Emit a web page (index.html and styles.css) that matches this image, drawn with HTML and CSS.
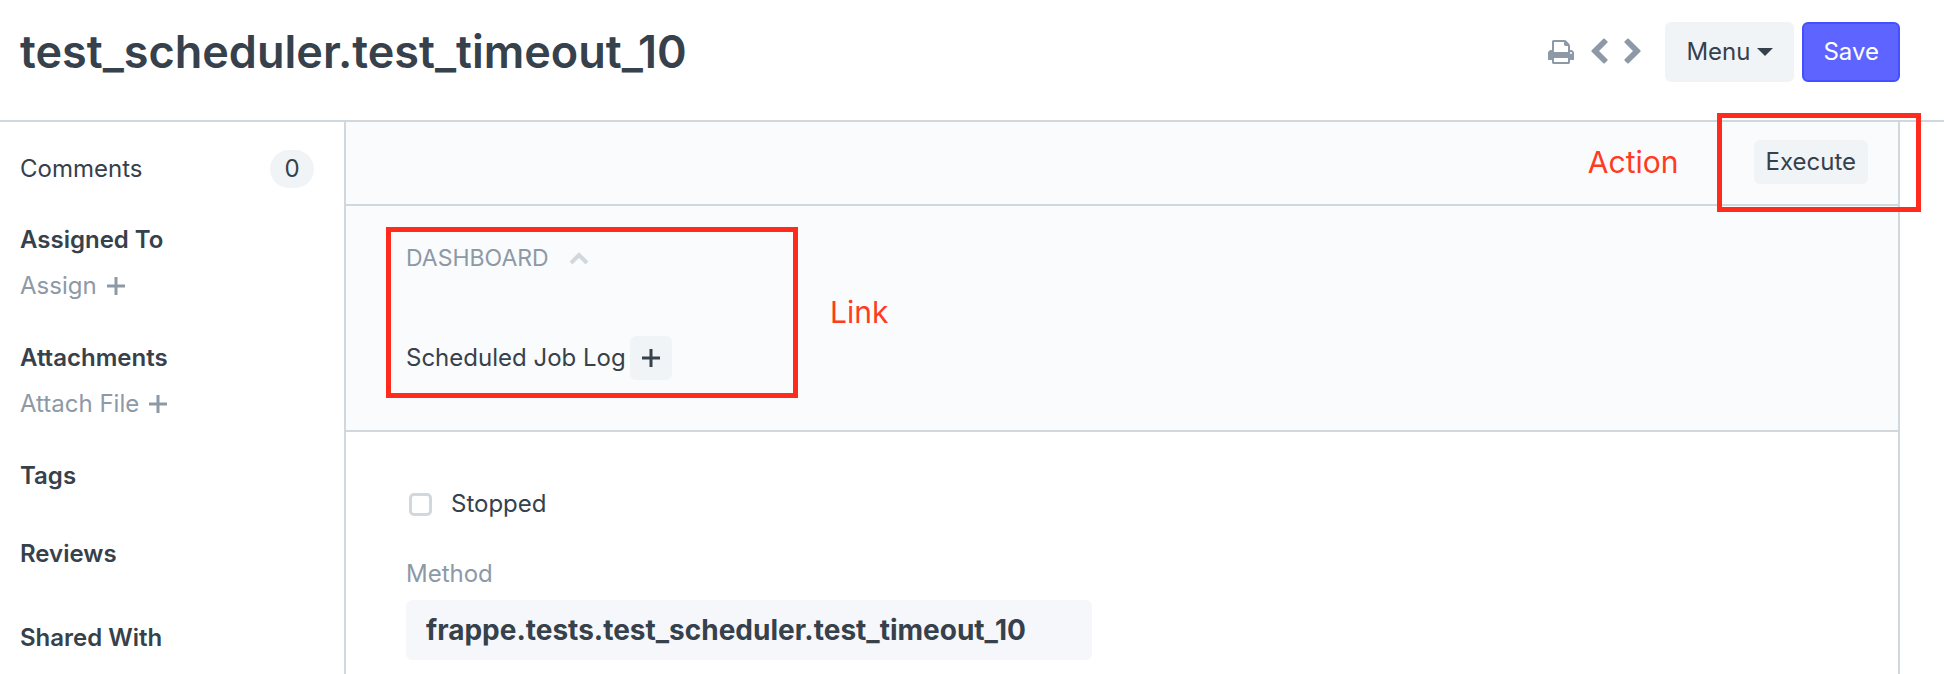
FILE: index.html
```
<!DOCTYPE html>
<html lang="en">
<head>
<meta charset="utf-8">
<title>test_scheduler.test_timeout_10</title>
<link rel="stylesheet" href="styles.css">
</head>
<body>
<header class="page-head">
  <h1 class="title">test_scheduler.test_timeout_10</h1>
  <div class="head-actions">
    <button class="icon-btn" aria-label="Print"><svg width="28" height="28" viewBox="0 0 1792 1792"><path d="M448 1536h896v-256h-896v256zm0-640h896v-384h-160q-40 0-68-28t-28-68v-160h-640v640zm1152 64q0-26-19-45t-45-19-45 19-19 45 19 45 45 19 45-19 19-45zm128 0v416q0 13-9.5 22.5t-22.5 9.5h-224v160q0 40-28 68t-68 28h-960q-40 0-68-28t-28-68v-160h-224q-13 0-22.5-9.5t-9.5-22.5v-416q0-79 56.5-135.5t135.5-56.5h64v-544q0-40 28-68t68-28h672q40 0 88 20t76 48l152 152q28 28 48 76t20 88v256h64q79 0 135.5 56.5t56.5 135.5z"/></svg></button>
    <button class="icon-btn" aria-label="Previous"><svg width="17" height="28" viewBox="384 0 1088 1792"><path d="M1427 301l-531 531 531 531q19 19 19 45t-19 45l-166 166q-19 19-45 19t-45-19l-742-742q-19-19-19-45t19-45l742-742q19-19 45-19t45 19l166 166q19 19 19 45t-19 45z"/></svg></button>
    <button class="icon-btn" aria-label="Next"><svg width="17" height="28" viewBox="320 0 1088 1792"><path d="M1363 877l-742 742q-19 19-45 19t-45-19l-166-166q-19-19-19-45t19-45l531-531-531-531q-19-19-19-45t19-45l166-166q19-19 45-19t45 19l742 742q19 19 19 45t-19 45z"/></svg></button>
    <div class="button-pair">
      <button class="btn">Menu <span class="caret"></span></button>
      <button class="btn btn-primary">Save</button>
    </div>
  </div>
</header>
<div class="page-body">
  <aside class="sidebar">
    <div class="comments"><a class="side-link" href="#">Comments</a><span class="badge">0</span></div>
    <section class="group">
      <h2 class="side-title">Assigned To</h2>
      <button class="add-btn">Assign <svg width="18" height="18" viewBox="0 0 18 18"><path d="M9 0v18M0 9h18"/></svg></button>
    </section>
    <section class="group">
      <h2 class="side-title">Attachments</h2>
      <button class="add-btn">Attach File <svg width="18" height="18" viewBox="0 0 18 18"><path d="M9 0v18M0 9h18"/></svg></button>
    </section>
    <section class="group group-tags"><h2 class="side-title">Tags</h2></section>
    <section class="group group-reviews"><h2 class="side-title">Reviews</h2></section>
    <section class="group"><h2 class="side-title">Shared With</h2></section>
  </aside>
  <main class="form">
    <div class="toolbar">
      <span class="note">Action</span>
      <div class="action">
        <button class="btn-small">Execute</button>
        <span class="mark mark-action"></span>
      </div>
    </div>
    <section class="dashboard">
      <div class="dash-content">
        <button class="dash-toggle">Dashboard <svg width="20" height="14" viewBox="0 0 20 14"><path d="M2 12l8-8 8 8"/></svg></button>
        <div class="doc-link">
          <a class="side-link" href="#">Scheduled Job Log</a>
          <button class="btn-small btn-plus" aria-label="New Scheduled Job Log"><svg width="18" height="18" viewBox="0 0 18 18"><path d="M9 0v18M0 9h18"/></svg></button>
        </div>
        <span class="mark mark-link"></span>
      </div>
      <span class="note">Link</span>
    </section>
    <section class="fields">
      <div class="column">
        <label class="check"><input class="checkbox" type="checkbox">Stopped</label>
        <label class="field-label" for="method">Method</label>
        <input class="field-input" id="method" type="text" value="frappe.tests.test_scheduler.test_timeout_10" readonly>
      </div>
    </section>
  </main>
</div>
</body>
</html>
```
FILE: styles.css
```
* { box-sizing: border-box; }
body {
  margin: 0;
  min-height: 100vh;
  display: flex;
  flex-direction: column;
  background: #fff;
  color: #36414c;
  font: 400 24px/36px Inter, "Liberation Sans", sans-serif;
}
h1, h2 { margin: 0; }
button, input { font: inherit; color: inherit; }
button { border: 0; padding: 0; background: none; cursor: pointer; }
svg { display: block; flex: none; }

.page-head {
  display: flex;
  justify-content: space-between;
  align-items: flex-start;
  padding: 22px 44px 38px 20px;
  border-bottom: 2px solid #d1d8dd;
}
.title { font-size: 45px; font-weight: 600; line-height: 60px; }
.head-actions { display: flex; align-items: center; gap: 16px; }
.icon-btn { fill: #8d99a6; }
.button-pair { display: flex; gap: 8px; margin-left: 8px; }
.btn {
  display: flex;
  align-items: center;
  gap: 7px;
  height: 60px;
  padding: 0 21px;
  border-radius: 6px;
  background: #f0f4f7;
}
.btn-primary {
  padding: 0 19px;
  border: 2px solid #444fff;
  background: #5e64ff;
  color: #fff;
}
.caret {
  border: 8px solid transparent;
  border-top-color: currentColor;
  border-bottom: 0;
}

.page-body { flex: 1; display: flex; padding-right: 44px; }
.sidebar { flex: none; width: 344px; padding: 28px 30px 0 20px; }
.comments { display: flex; justify-content: space-between; align-items: center; margin-bottom: 34px; }
.side-link { color: inherit; text-decoration: none; }
.badge {
  min-width: 44px;
  border-radius: 20px;
  background: #f0f4f7;
  line-height: 38px;
  text-align: center;
}
.group { display: flex; flex-direction: column; align-items: flex-start; gap: 10px; margin-bottom: 36px; }
.group-tags { margin-bottom: 42px; }
.group-reviews { margin-bottom: 48px; }
.group:last-child { margin-bottom: 0; }
.side-title { font-size: 24px; font-weight: 600; line-height: 36px; }
.add-btn {
  display: flex;
  align-items: center;
  gap: 10px;
  color: #8d99a6;
}
.add-btn svg, .btn-plus svg { stroke: currentColor; stroke-width: 3; }

.form {
  flex: 1;
  min-width: 0;
  border: solid #d1d8dd;
  border-width: 0 2px;
}
.toolbar {
  display: flex;
  justify-content: flex-end;
  align-items: center;
  gap: 75px;
  padding: 18px 30px 20px;
  border-bottom: 2px solid #d1d8dd;
  background: #fafbfc;
}
.note { color: #ff3b22; font-size: 30px; line-height: 44px; }
.action, .dash-content { position: relative; }
.btn-small {
  display: block;
  height: 44px;
  padding: 0 12px;
  border-radius: 6px;
  background: #f0f4f7;
}
.mark { position: absolute; border: 5px solid #ff2b1c; pointer-events: none; }
.mark-action { inset: -27px -53px -28px -37px; z-index: 1; }
.mark-link { inset: -17px 0 -18px -20px; }
.dashboard {
  display: flex;
  align-items: center;
  gap: 32px;
  padding: 38px 60px 50px;
  border-bottom: 2px solid #d1d8dd;
  background: #fafbfc;
}
.dash-content { width: 392px; }
.dash-toggle {
  display: flex;
  align-items: center;
  gap: 20px;
  margin-bottom: 64px;
  line-height: 28px;
  font-size: 23px;
  color: #8d99a6;
  text-transform: uppercase;
}
.dash-toggle svg { fill: none; stroke: #d1d8dd; stroke-width: 4; }
.doc-link { display: flex; align-items: center; gap: 4px; }

.fields { padding: 54px 60px 14px; }
.column { width: calc(50% - 30px); }
.check { display: flex; align-items: center; gap: 19px; margin-bottom: 34px; padding-left: 3px; }
.checkbox {
  appearance: none;
  width: 23px;
  height: 23px;
  margin: 0;
  border: 3px solid #d1d8dd;
  border-radius: 5px;
}
.field-label { display: block; margin-bottom: 8px; color: #8d99a6; }
.field-input {
  display: block;
  width: 100%;
  height: 60px;
  padding: 0 20px;
  border: 0;
  border-radius: 6px;
  background: #f5f7fa;
  font-size: 28px;
  font-weight: 700;
}
```
